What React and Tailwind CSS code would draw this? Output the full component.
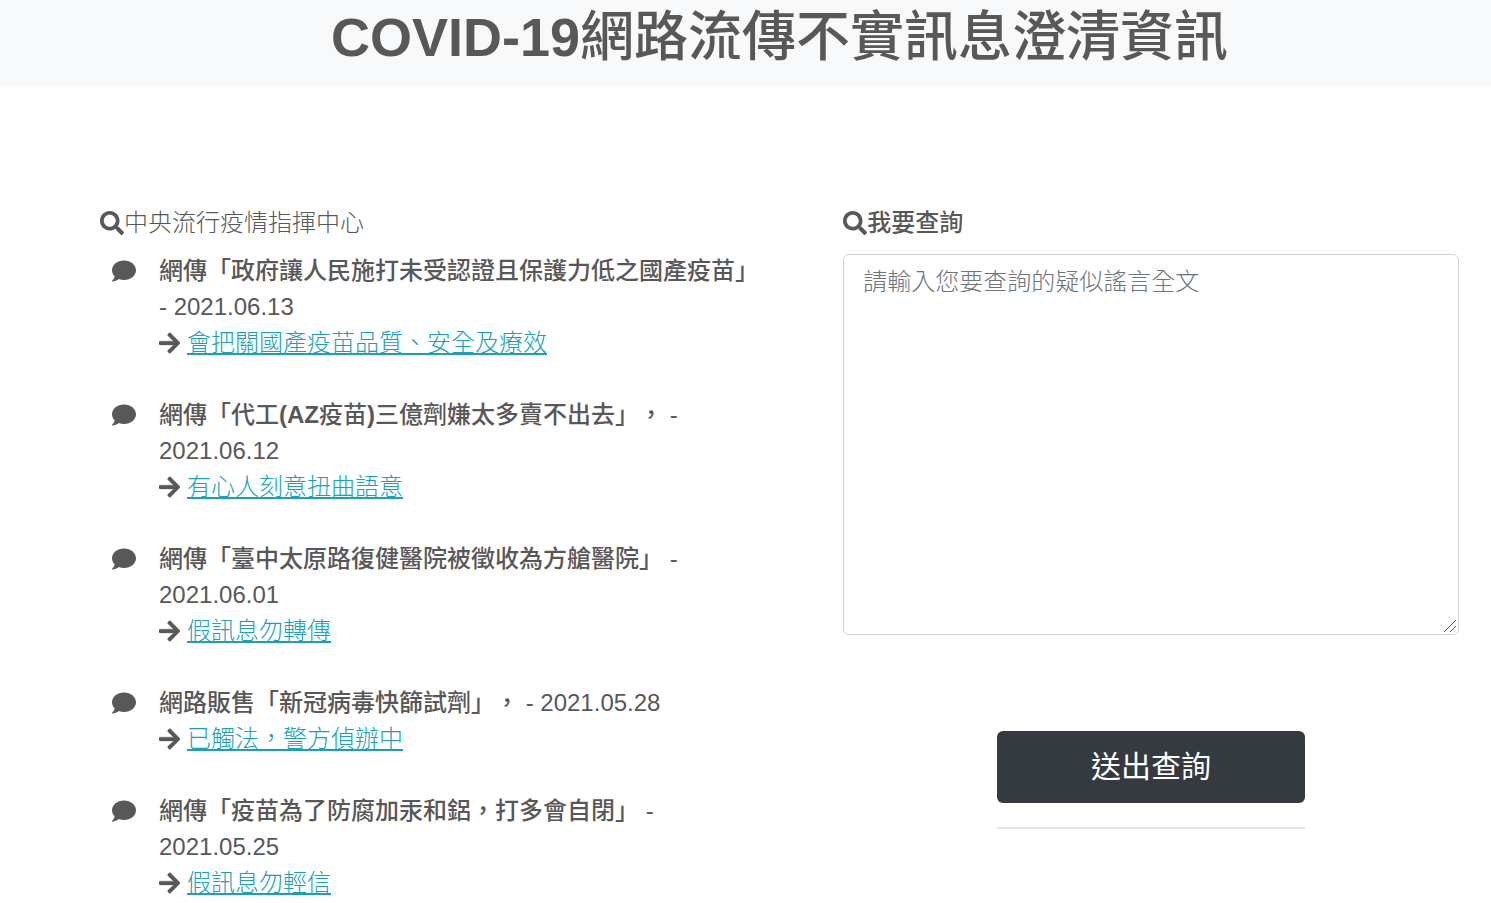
import { FaSearch, FaComment, FaArrowRight } from 'react-icons/fa';

// full-width comma
const COMMA = '\uFF0C';

const RUMORS = [
  { title: '網傳「政府讓人民施打未受認證且保護力低之國產疫苗」', date: '2021.06.13', reply: '會把關國產疫苗品質、安全及療效' },
  {
    title: <>網傳「代工<b>(AZ</b>疫苗<b>)</b>三億劑嫌太多賣不出去」{COMMA}</>,
    date: '2021.06.12',
    reply: '有心人刻意扭曲語意',
  },
  { title: '網傳「臺中太原路復健醫院被徵收為方艙醫院」', date: '2021.06.01', reply: '假訊息勿轉傳' },
  { title: `網路販售「新冠病毒快篩試劑」${COMMA}`, date: '2021.05.28', reply: `已觸法${COMMA}警方偵辦中` },
  { title: `網傳「疫苗為了防腐加汞和鋁${COMMA}打多會自閉」`, date: '2021.05.25', reply: '假訊息勿輕信' },
];

function RumorItem({ title, date, reply }) {
  return (
    <li className="flex">
      <FaComment className="mt-1.5 mr-[23px] size-6 shrink-0" />
      <div>
        <p>
          <strong className="font-medium">{title}</strong> - {date}
        </p>
        <p className="flex items-center gap-[7px]">
          <FaArrowRight className="h-6 w-[21px] shrink-0 stroke-[8]" />
          <a href="#" className="font-light text-[#17a2b8] underline">{reply}</a>
        </p>
      </div>
    </li>
  );
}

export default function App() {
  return (
    <div
      lang="zh-Hant"
      className="font-['Liberation_Sans','Noto_Sans_CJK_TC',sans-serif] text-2xl leading-9 text-[#595757] [text-spacing-trim:space-all]"
    >
      <header className="bg-[#f8f9fa] pb-3 pl-17">
        <h1 className="text-center text-[54px] leading-[74px] font-medium">
          <b>COVID-19</b>網路流傳不實訊息澄清資訊
        </h1>
      </header>

      <main className="grid grid-cols-[13fr_12fr] gap-x-[76px] pt-[119px] pr-8 pl-[100px]">
        <section>
          <h2 className="flex items-center font-light">
            <FaSearch className="size-6" />
            中央流行疫情指揮中心
          </h2>
          <ul className="mt-3 space-y-9 pl-3">
            {RUMORS.map((r) => (
              <RumorItem key={r.date} {...r} />
            ))}
          </ul>
        </section>

        <section>
          <label htmlFor="query" className="flex items-center font-medium">
            <FaSearch className="size-6" />
            我要查詢
          </label>
          <div className="relative mt-[13px]">
            <textarea
              id="query"
              placeholder="請輸入您要查詢的疑似謠言全文"
              className="block h-[381px] w-full resize-none rounded-md border border-[#ced4da] px-[19px] py-[9px] font-light placeholder:text-[#6c757d]"
            />
            <svg
              viewBox="0 0 12 12"
              className="pointer-events-none absolute right-[3px] bottom-[3px] size-3"
              fill="none"
              stroke="#555"
            >
              <path d="M0 12 12 0M6 12 12 6" />
            </svg>
          </div>
          <div className="mx-auto mt-24 w-1/2">
            <button type="button" className="h-[72px] w-full rounded-md bg-[#343a40] text-3xl text-white">
              送出查詢
            </button>
            <hr className="mt-6 border-t-2 border-black/10" />
          </div>
        </section>
      </main>
    </div>
  );
}
